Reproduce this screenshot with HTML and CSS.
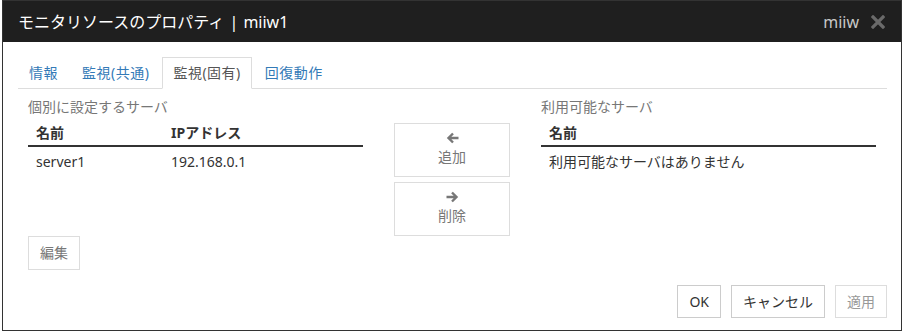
FILE: index.html
```html
<!DOCTYPE html>
<html lang="ja">
<head>
<meta charset="utf-8">
<link rel="stylesheet" href="styles.css">
</head>
<body>
<div class="dialog">
  <div class="header">
    <div class="title">モニタリソースのプロパティ | miiw1</div>
    <div class="header-right">
      <span class="user">miiw</span>
      <svg class="close" width="14" height="14" viewBox="0 0 14 14"><path d="M2 2L12 12M12 2L2 12" stroke="#6a6a6a" stroke-width="3.2" stroke-linecap="square"/></svg>
    </div>
  </div>
  <div class="body">
    <ul class="tabs">
      <li class="tab"><a>情報</a></li>
      <li class="tab"><a>監視(共通)</a></li>
      <li class="tab active"><a>監視(固有)</a></li>
      <li class="tab"><a>回復動作</a></li>
    </ul>
    <div class="panel">
      <div class="cols">
        <div class="col">
          <div class="label">個別に設定するサーバ</div>
          <table class="tbl">
            <thead><tr><th class="c1">名前</th><th>IPアドレス</th></tr></thead>
            <tbody><tr><td class="c1">server1</td><td>192.168.0.1</td></tr></tbody>
          </table>
        </div>
        <div class="mid">
          <button class="move">
            <svg width="13" height="12" viewBox="0 0 13 12"><path d="M12.5 6H2.5M7 1.5L2.5 6L7 10.5" fill="none" stroke="#777" stroke-width="2.4"/></svg>
            <span>追加</span>
          </button>
          <button class="move">
            <svg width="13" height="12" viewBox="0 0 13 12"><path d="M0.5 6H10.5M6 1.5L10.5 6L6 10.5" fill="none" stroke="#777" stroke-width="2.4"/></svg>
            <span>削除</span>
          </button>
        </div>
        <div class="col">
          <div class="label">利用可能なサーバ</div>
          <table class="tbl">
            <thead><tr><th>名前</th></tr></thead>
            <tbody><tr><td>利用可能なサーバはありません</td></tr></tbody>
          </table>
        </div>
      </div>
      <button class="btn light edit">編集</button>
    </div>
    <div class="footer">
      <button class="btn">OK</button>
      <button class="btn">キャンセル</button>
      <button class="btn light disabled">適用</button>
    </div>
  </div>
</div>
</body>
</html>
```

FILE: styles.css
```css
* { box-sizing: border-box; }
html, body { margin: 0; padding: 0; background: #fff; }
body {
  font-family: "Noto Sans", "Noto Sans CJK JP", sans-serif;
  font-size: 14px;
  line-height: 20px;
  color: #333;
}
.dialog {
  margin-left: 2px;
  width: 900px;
  height: 331px;
  border: 1px solid #333;
  display: flex;
  flex-direction: column;
}
.header {
  height: 41px;
  background: #1f1f1f;
  display: flex;
  align-items: center;
  justify-content: space-between;
  padding: 0 16px 0 15px;
}
.title {
  color: #fff;
  font-size: 16px;
  line-height: 24px;
  word-spacing: 1px;
}
.header-right {
  display: flex;
  align-items: center;
  gap: 12px;
}
.user {
  color: #c8c8c8;
  font-size: 16px;
}
.close { display: block; }
.body {
  flex: 1;
  padding: 15px 14px 0 15px;
  display: flex;
  flex-direction: column;
}
.tabs {
  list-style: none;
  margin: 0;
  padding: 0;
  display: flex;
  border-bottom: 1px solid #ddd;
}
.tab {
  margin-right: 2px;
  margin-bottom: -1px;
}
.tab a {
  display: block;
  padding: 5px 10px;
  border: 1px solid transparent;
  color: #337ab7;
  line-height: 20px;
  letter-spacing: 0.5px;
}
.tab.active a {
  color: #555;
  background: #fff;
  border-color: #ddd #ddd transparent #ddd;
}
.panel {
  padding: 8px 0 0 10px;
}
.cols {
  display: grid;
  grid-template-columns: 335px 116px 335px;
  column-gap: 31px;
}
.label {
  color: #777;
  line-height: 20px;
}
.tbl {
  width: 100%;
  border-collapse: collapse;
}
.tbl th {
  text-align: left;
  font-weight: bold;
  padding: 6px 8px 2px;
  border-bottom: 2px solid #333;
  line-height: 20px;
}
.tbl td {
  padding: 5px 8px;
  line-height: 20px;
}
.tbl .c1 { width: 135px; }
.mid {
  padding-top: 26px;
  display: flex;
  flex-direction: column;
  gap: 5px;
}
.move {
  height: 54px;
  width: 116px;
  background: #fff;
  border: 1px solid #ddd;
  display: flex;
  flex-direction: column;
  align-items: center;
  justify-content: center;
  padding: 0 0 2px;
  font-family: inherit;
  font-size: 14px;
  color: #777;
  line-height: 20px;
  gap: 3px;
}
.move svg { display: block; }
.btn {
  height: 33px;
  padding: 0 11px;
  background: #fff;
  border: 1px solid #ccc;
  font-family: inherit;
  font-size: 14px;
  line-height: 20px;
  color: #333;
}
.btn.light { border-color: #ddd; color: #777; }
.btn.disabled { color: #999; }
.edit {
  height: 34px;
  margin-top: 0;
}
.footer {
  margin-top: 15px;
  display: flex;
  justify-content: flex-end;
  gap: 10px;
}
```
